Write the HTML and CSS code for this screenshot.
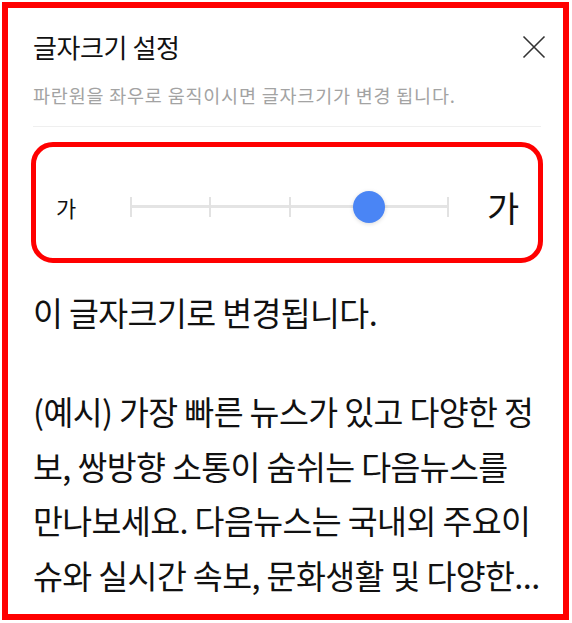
FILE: index.html
```html
<!DOCTYPE html>
<html>
<head>
  <link rel="stylesheet" href="styles.css">
</head>
<body>
  <div class="frame">
    <div class="panel-head">
      <div class="head-row">
        <h2 class="title">글자크기 설정</h2>
        <button class="close-btn" aria-label="닫기">
          <svg width="24" height="24" viewBox="0 0 24 24">
            <path d="M1.5 1.5 L22.5 22.5 M22.5 1.5 L1.5 22.5" stroke="#333" stroke-width="1.6" fill="none"/>
          </svg>
        </button>
      </div>
      <p class="desc">파란원을 좌우로 움직이시면 글자크기가 변경 됩니다.</p>
    </div>

    <div class="size-box">
      <span class="size-small">가</span>
      <div class="track">
        <span class="tick"></span>
        <span class="tick"></span>
        <span class="tick"></span>
        <span class="tick"></span>
        <span class="tick"></span>
        <span class="thumb" style="left: 75%"></span>
      </div>
      <span class="size-large">가</span>
    </div>

    <p class="preview-title">이 글자크기로 변경됩니다.</p>
    <p class="preview-text">(예시) 가장 빠른 뉴스가 있고 다양한 정<br>보, 쌍방향 소통이 숨쉬는 다음뉴스를<br>만나보세요. 다음뉴스는 국내외 주요이<br>슈와 실시간 속보, 문화생활 및 다양한...</p>
  </div>
</body>
</html>
```

FILE: styles.css
```css
body {
  margin: 0;
  font-family: "Noto Sans CJK KR", "Noto Sans", sans-serif;
  background: #fff;
  color: #111;
}
.frame {
  box-sizing: border-box;
  width: 567px;
  height: 618px;
  margin: 2px;
  border: 6px solid #ff0000;
  padding: 0 22px 0 25px;
  overflow: hidden;
}
.panel-head {
  padding-top: 22px;
  padding-bottom: 20px;
  border-bottom: 1px solid #efefef;
}
.head-row {
  display: flex;
  justify-content: space-between;
  align-items: center;
}
.title {
  margin: 0;
  font-size: 26px;
  font-weight: 400;
  line-height: 34px;
  letter-spacing: -0.4px;
}
.close-btn {
  border: 0;
  background: none;
  padding: 0;
  margin-right: -5px;
  width: 24px;
  height: 24px;
  cursor: pointer;
}
.close-btn svg {
  display: block;
}
.desc {
  margin: 20px 0 0;
  font-size: 18.5px;
  line-height: 22px;
  letter-spacing: 0.8px;
  color: #a3a3a3;
  white-space: nowrap;
}
.size-box {
  display: flex;
  align-items: center;
  box-sizing: border-box;
  width: 512px;
  height: 121px;
  margin: 15px 0 0 -2px;
  padding: 8px 0 0 20px;
  border: 5px solid #ff0000;
  border-radius: 22px;
}
.size-small {
  font-size: 22px;
  width: 24px;
  margin-right: 50px;
}
.track {
  position: relative;
  flex: none;
  width: 319px;
  height: 20px;
  display: flex;
  justify-content: space-between;
  align-items: center;
  background: linear-gradient(#e4e4e4, #e4e4e4) center / 100% 3px no-repeat;
}
.tick {
  width: 2px;
  height: 20px;
  background: #e2e2e2;
}
.thumb {
  position: absolute;
  top: 50%;
  width: 32px;
  height: 32px;
  margin: -16px 0 0 -16px;
  border-radius: 50%;
  background: #4a85f5;
  box-shadow: 0 1px 4px rgba(0, 0, 0, 0.15);
}
.size-large {
  font-size: 35px;
  margin-left: 38px;
  line-height: 1;
}
.preview-title {
  margin: 29px 0 0;
  font-size: 32.5px;
  line-height: 40px;
  letter-spacing: -0.6px;
}
.preview-text {
  margin: 52px 0 0;
  font-size: 32.5px;
  line-height: 54.5px;
  letter-spacing: -0.6px;
  white-space: nowrap;
}
```
